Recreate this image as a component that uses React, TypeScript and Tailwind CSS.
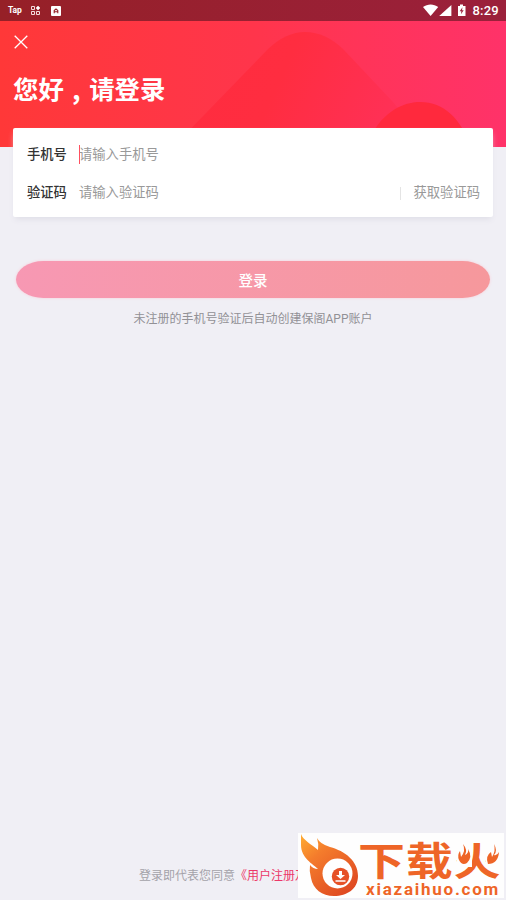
import React from 'react';

function StatusBar() {
  return (
    <div className="flex h-[21px] shrink-0 items-center bg-gradient-to-r from-[#962027] to-[#9b203b] text-white">
      <span className="ml-[8px] w-[14px] text-[8.5px] leading-none font-bold tracking-[-0.1px]">Tap</span>
      <svg className="ml-[9px]" width="9" height="9" viewBox="0 0 9 9" fill="none" stroke="#f2dcdc">
        <path d="M.5.5h3v3h-3zM.5 5.5h3v3h-3zM5.5 5.5h3v3h-3z" />
        <path d="M7 0l2 2-2 2-2-2z" fill="#fff" stroke="#fff" strokeWidth=".5" />
      </svg>
      <svg className="ml-[11px]" width="10" height="10" viewBox="0 0 10 10">
        <rect width="10" height="10" rx="1" fill="#fff" />
        <path d="M3.2 7.3V4.6L5 2.9l1.8 1.7v2.7M3.3 5.7h3.4" fill="none" stroke="#962027" strokeWidth="1.1" />
      </svg>
      <svg className="ml-auto" width="46" height="13" viewBox="0 0 46 13" fill="#fff">
        <path d="M0 3.1C4.5-.5 10.7-.5 15.2 3.1L7.6 12z" />
        <path d="M28.4 1v11H16.2z" />
        <path d="M35 2h2V.4h3V2h2.5v10H35z" />
        <path d="M39.5 3.3l-2.8 4h1.7l-.5 3 2.8-4.1H39z" fill="#9b203b" />
      </svg>
      <span className="mr-[7px] ml-[3px] text-[13px] leading-[21px] font-medium tracking-[0.25px]">8:29</span>
    </div>
  );
}

function Header() {
  return (
    <header className="relative h-[126px] shrink-0 bg-gradient-to-r from-[#ff3838] via-[#ff354b] to-[#ff3269] text-white">
      <svg className="absolute inset-0" width="506" height="126" viewBox="0 0 506 126">
        <defs>
          <linearGradient id="hill" x1="0" x2="1" y1=".4" y2=".6">
            <stop offset="0" stopColor="#ff2c3f" />
            <stop offset=".4" stopColor="#ff2d40" />
            <stop offset="1" stopColor="#ff315c" />
          </linearGradient>
        </defs>
        <path d="M173 126L268 28Q286 11 305 11Q326 11 344 29L393 81L430 126Z" fill="url(#hill)" />
        <path d="M366 126C379 91 403 81 420 81C444 81 461 98 471 126Z" fill="#ff293d" />
      </svg>
      <div className="relative px-[13px] pt-[14px]">
        <svg className="ml-[1px]" width="14" height="14" viewBox="0 0 14 14" fill="none" stroke="#fff" strokeWidth="1.3">
          <path d="M.7.7l12.6 12.6M13.3.7L.7 13.3" />
        </svg>
        <h1 className="mt-[22px] flex text-[25.4px] leading-[38px] font-bold whitespace-nowrap">
          <span>您好</span>
          <span className="w-[25.4px] pl-[5.5px] font-['Noto_Sans_CJK_SC'] [font-feature-settings:'halt']">，</span>
          <span>请登录</span>
        </h1>
      </div>
    </header>
  );
}

function LoginForm() {
  return (
    <section className="relative mx-[13px] -mt-[19px] h-[89px] shrink-0 rounded-[2px] bg-white px-[14px] pt-[8px] text-[13.3px] shadow-[0_4px_6px_-2px_#dedde6]">
      <div className="flex h-[38px] items-center">
        <span className="w-[52px] font-medium text-[#333]">手机号</span>
        <span className="relative -top-px -mr-px h-[19px] w-px bg-[#ff5060]" />
        <span className="text-[#999]">请输入手机号</span>
      </div>
      <div className="flex h-[38px] items-center">
        <span className="w-[52px] font-medium text-[#333]">验证码</span>
        <span className="text-[#999]">请输入验证码</span>
        <span className="ml-auto h-[13px] w-px bg-[#e4e4e4]" />
        <span className="-mr-px ml-[13px] text-[#999]">获取验证码</span>
      </div>
    </section>
  );
}

function Watermark() {
  return (
    <div className="absolute top-[833px] left-[298px] flex h-[65px] w-[206px] bg-[#fefefe]">
      <svg className="shrink-0" width="60" height="65" viewBox="0 0 60 65">
        <defs>
          <linearGradient id="flame" x1="0" y1="0" x2=".75" y2="1">
            <stop offset="0" stopColor="#ffad32" />
            <stop offset=".35" stopColor="#f47c2c" />
            <stop offset="1" stopColor="#df4922" />
          </linearGradient>
        </defs>
        <path d="M3 1C5 7 13 11 20 17Q21 11 19 5Q22 11 32 14C47 18 60 28 60 43C60 56 49 63 36 63C24 63 15 56 13 45Q11 38 12 32Q15 36 20 36C15 31 3 25 3 12Z" fill="url(#flame)" />
        <circle cx="39.5" cy="40.5" r="15" fill="#fff" />
        <circle cx="42.5" cy="43.5" r="8.7" fill="#e65127" />
        <path d="M41 38h3v4h3l-4.5 4-4.5-4h3zM37.5 47.2h10v1.6h-10z" fill="#fff" />
      </svg>
      <div className="relative flex-1 text-[#ee6527]">
        <div className="mt-[12px] flex h-[40px] origin-top scale-y-[0.82] items-center text-[47px] leading-[44px] font-bold tracking-[0.8px] whitespace-nowrap">下载火</div>
        <div className="absolute top-[48px] left-[8px] text-[17px] leading-[17px] font-bold tracking-[1.75px] whitespace-nowrap">xiazaihuo.com</div>
        <svg className="absolute top-[11px] left-[99px]" width="43" height="23" viewBox="0 0 43 23">
          <path d="M0 3h15v20H0zM29 3h14v18H29z" fill="#fefefe" />
          <path d="M6 0Q11 6 8 11Q12 9 11 5Q16 13 10 19Q5 22 2 16Q0 11 3 7L4 13Q9 7 6 0Z" fill="#ee6527" />
          <path d="M37 0Q41 7 37 11Q40 12 42 8Q41 20 31 20Q28 12 34 8L35 13Q39 7 37 0Z" fill="#ee6527" />
        </svg>
      </div>
    </div>
  );
}

export default function App() {
  return (
    <main className="relative flex h-[900px] w-[506px] flex-col overflow-hidden bg-[#f0eff5] font-[Roboto,'Noto_Sans_CJK_SC',sans-serif]">
      <StatusBar />
      <Header />
      <LoginForm />
      <button className="mx-[16px] mt-[44px] h-[37px] shrink-0 rounded-[28px/19px] bg-gradient-to-r from-[#f798b3] to-[#f6989c] pt-[5px] text-[14.5px] font-medium text-white shadow-[0_0_3px_#f9cdd8]">
        登录
      </button>
      <p className="mt-[11px] text-center text-[12px] leading-[20px] text-[#929196]">未注册的手机号验证后自动创建保阁APP账户</p>
      <footer className="mt-auto mb-[14px] pl-[139px] text-[12px] leading-[20px] whitespace-nowrap text-[#a4a2a9]">
        登录即代表您同意<span className="text-[#ec3768]">《用户注册及</span>
      </footer>
      <Watermark />
    </main>
  );
}
